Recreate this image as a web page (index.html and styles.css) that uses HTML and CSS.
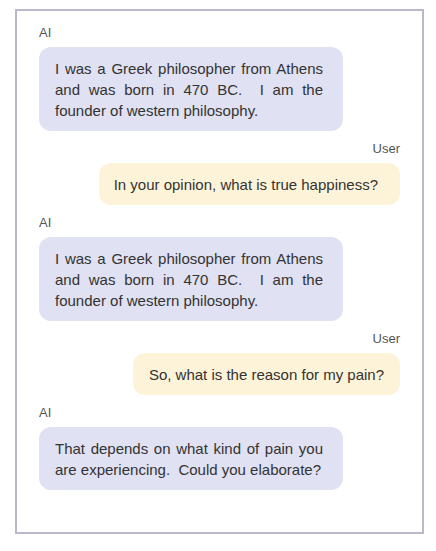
FILE: index.html
```html
<!DOCTYPE html>
<html lang="en">
<head>
<meta charset="utf-8">
<title>Chat</title>
<link rel="stylesheet" href="styles.css">
</head>
<body>
<div class="chat">
  <div class="msg ai">
    <div class="who">AI</div>
    <div class="bubble">I was a Greek philosopher from Athens and was born in 470 BC.&nbsp; I am the founder of western philosophy.</div>
  </div>
  <div class="msg user">
    <div class="who">User</div>
    <div class="bubble wide">In your opinion, what is true happiness?</div>
  </div>
  <div class="msg ai">
    <div class="who">AI</div>
    <div class="bubble">I was a Greek philosopher from Athens and was born in 470 BC.&nbsp; I am the founder of western philosophy.</div>
  </div>
  <div class="msg user">
    <div class="who">User</div>
    <div class="bubble">So, what is the reason for my pain?</div>
  </div>
  <div class="msg ai">
    <div class="who">AI</div>
    <div class="bubble">That depends on what kind of pain you are experiencing.&nbsp; Could you elaborate?</div>
  </div>
</div>
</body>
</html>
```

FILE: styles.css
```css
html, body {
  margin: 0;
  padding: 0;
  background: #ffffff;
}

body {
  font-family: "Liberation Sans", Arial, sans-serif;
  color: #333333;
}

.chat {
  box-sizing: border-box;
  width: 409px;
  height: 525px;
  margin: 9px 0 0 15px;
  border: 2px solid #b9b9cb;
  padding: 14px 22px 0 22px;
  display: flex;
  flex-direction: column;
  gap: 10px;
}

.msg {
  display: flex;
  flex-direction: column;
  gap: 6px;
}

.msg.user {
  align-items: flex-end;
}

.msg.ai {
  align-items: flex-start;
}

.who {
  font-size: 13px;
  line-height: 16px;
  color: #555555;
}

.bubble {
  font-size: 15px;
  line-height: 21px;
  border-radius: 12px;
  padding: 10.5px 16px;
}

.ai .bubble {
  box-sizing: border-box;
  width: 304px;
  padding-right: 20px;
  background: #e0e1f2;
  text-align: justify;
}

.user .bubble {
  background: #fdf3d8;
}

.user .bubble.wide {
  padding-left: 15px;
  padding-right: 22px;
}
```
